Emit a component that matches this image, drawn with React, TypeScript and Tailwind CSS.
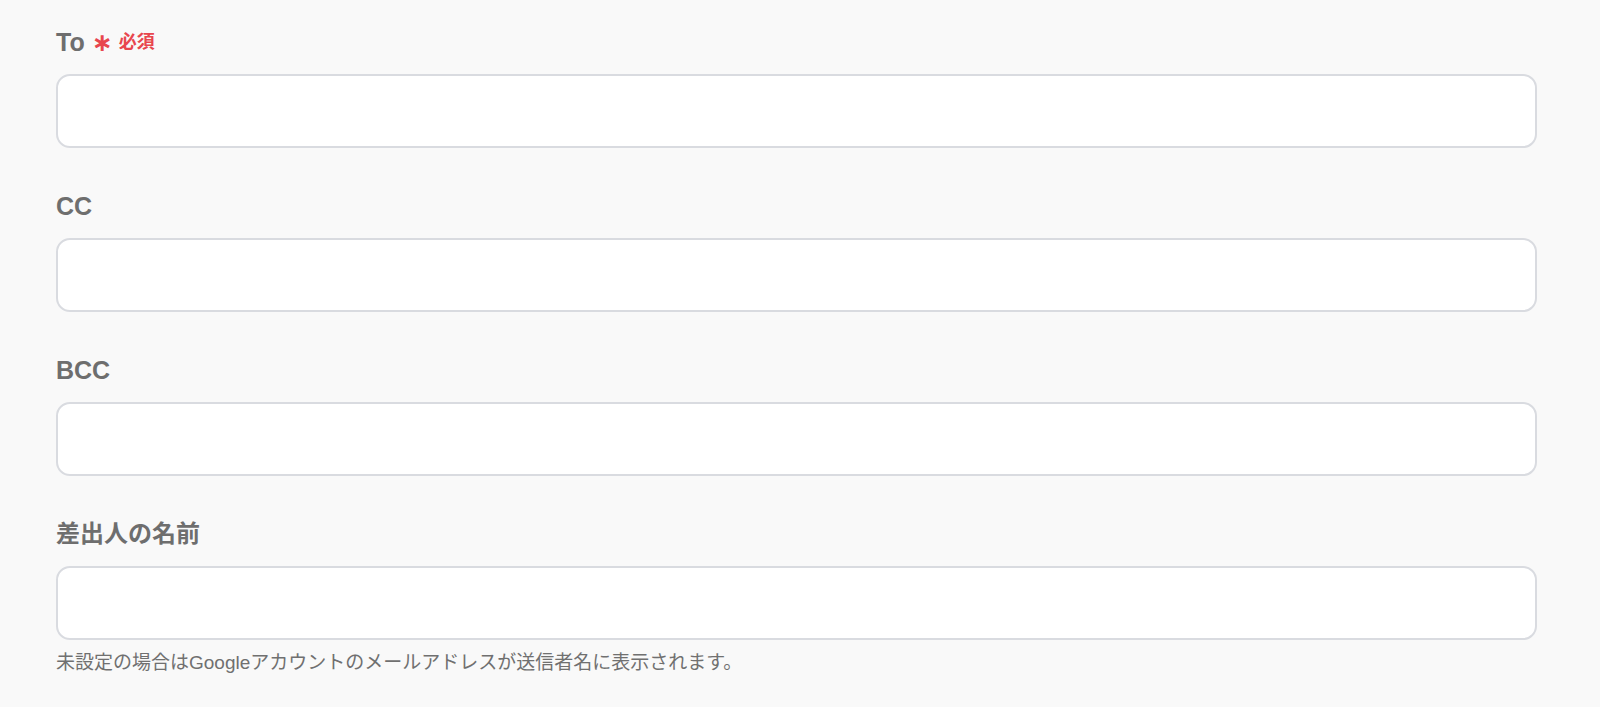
import React from 'react';

type FieldProps = {
    label: string;
    required?: boolean;
    help?: string;
    latin?: boolean;
};

const Field: React.FC<FieldProps> = ({ label, required, help, latin }) => {
    return (
        <div className="flex flex-col">
            <div className="flex items-center h-9 mb-[14px]">
                <span className={latin ? 'text-[25px] font-bold text-[#6e6e6e] leading-9' : 'text-[24px] font-bold text-[#6e6e6e] leading-9'}>
                    {label}
                </span>
                {required && (
                    <span className="flex items-center ml-[7px] text-[#e8464e] font-bold">
                        <span className="text-[25px] leading-9 mt-[2px] font-['DejaVu_Sans',sans-serif]">∗</span>
                        <span className="text-[18px] ml-[6px] leading-9">必須</span>
                    </span>
                )}
            </div>
            <input
                type="text"
                className="h-[74px] w-full rounded-[14px] border-2 border-[#d9dbe0] bg-white px-4 text-[18px] outline-none"
            />
            {help && (
                <p className="mt-[9px] text-[19px] leading-[27px] text-[#707070]">{help}</p>
            )}
        </div>
    );
};

export default function App() {
    return (
        <div className="min-h-screen bg-[#f9f9f9] pl-[56px] pr-[63px] pt-[24px] font-['Liberation_Sans','Noto_Sans_CJK_JP',sans-serif]">
            <div className="flex flex-col gap-[40px]">
                <Field label="To" required latin />
                <Field label="CC" latin />
                <Field label="BCC" latin />
                <Field
                    label="差出人の名前"
                    help="未設定の場合はGoogleアカウントのメールアドレスが送信者名に表示されます。"
                />
            </div>
        </div>
    );
}
